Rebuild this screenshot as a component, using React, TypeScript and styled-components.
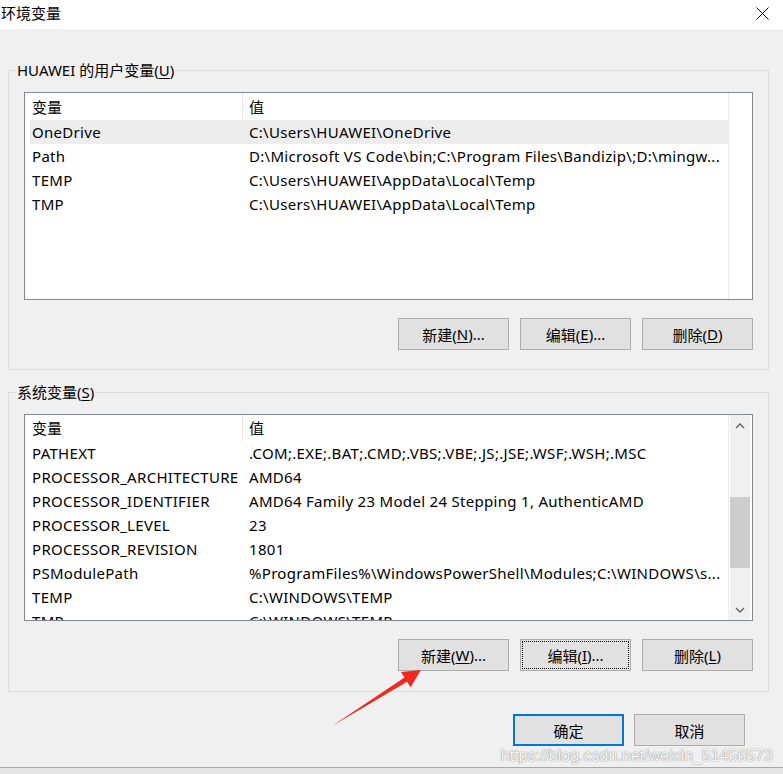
import React from "react";
import styled, { createGlobalStyle } from "styled-components";

const FONT = `"Noto Sans", "Noto Sans CJK SC", sans-serif`;

const GlobalStyle = createGlobalStyle`
  html, body { margin: 0; padding: 0; background: #f0f0f0; }
  body { font-family: ${FONT}; }
  * { box-sizing: border-box; }
`;

const Window = styled.div`
  position: relative;
  width: 783px;
  height: 774px;
  overflow: hidden;
  background: #f0f0f0;
  display: flex;
  flex-direction: column;
  font-family: ${FONT};
  font-size: 15px;
  color: #000;
`;

const TitleBar = styled.div`
  height: 29px;
  flex: none;
  background: #fff;
  display: flex;
  align-items: center;
  justify-content: space-between;
  padding: 0 14px 3px 1px;
`;

const Title = styled.span`
  font-size: 15px;
  line-height: 20px;
  color: #000;
`;

const Body = styled.div`
  flex: 1;
  display: flex;
  flex-direction: column;
  padding: 31px 14px 0 8px;
  border-bottom: 1px solid #a8a8a8;
`;

const BottomStrip = styled.div`
  height: 6px;
  flex: none;
  background: #e6e6e6;
`;

const Group = styled.fieldset<{ $bottom: number; $top?: number }>`
  margin: ${(p) => p.$top ?? 0}px 0 0 0;
  padding: 12px 15px ${(p) => p.$bottom}px 15px;
  border: 1px solid #dcdcdc;
  min-width: 0;
  display: flex;
  flex-direction: column;
`;

const Legend = styled.legend`
  margin-left: -8px;
  padding: 0 1px;
  font-size: 15px;
  line-height: 20px;
  color: #000;
`;

const Mn = styled.span`
  text-decoration: underline;
  text-underline-offset: 2px;
`;

const ListBox = styled.div<{ $h: number }>`
  height: ${(p) => p.$h}px;
  border: 1px solid #828790;
  background: #fff;
  display: flex;
  overflow: hidden;
`;

const ListContent = styled.div`
  width: 704px;
  flex: none;
  display: flex;
  flex-direction: column;
  overflow: hidden;
  border-right: 1px solid #eaeaea;
`;

const Gutter = styled.div`
  flex: 1;
  display: flex;
  padding: 0 2px 0 1px;
`;

const HeaderRow = styled.div<{ $h: number }>`
  display: grid;
  grid-template-columns: 218px 1fr;
  height: ${(p) => p.$h}px;
  flex: none;
`;

const HeaderCell = styled.div<{ $sep?: boolean }>`
  display: flex;
  align-items: center;
  padding-left: ${(p) => (p.$sep ? 7 : 6)}px;
  border-right: ${(p) => (p.$sep ? "1px solid #e5e5e5" : "none")};
  font-size: 15px;
  line-height: 20px;
`;

const Row = styled.div<{ $selected?: boolean }>`
  display: grid;
  grid-template-columns: 213px 1fr;
  height: 24px;
  flex: none;
  margin-left: 5px;
  background: ${(p) => (p.$selected ? "#ededed" : "transparent")};
`;

const Cell = styled.div<{ $first?: boolean }>`
  padding-left: ${(p) => (p.$first ? 2 : 6)}px;
  font-size: 15px;
  line-height: 24px;
  letter-spacing: 0.3px;
  white-space: nowrap;
  overflow: hidden;
`;

const ScrollBar = styled.div`
  flex: 1;
  background: #f0f0f0;
  display: flex;
  flex-direction: column;
`;

const ScrollArrow = styled.div`
  height: 21px;
  flex: none;
  display: flex;
  align-items: center;
  justify-content: center;
`;

const ScrollTrack = styled.div`
  flex: 1;
  display: flex;
  flex-direction: column;
  padding-top: 61px;
`;

const Thumb = styled.div`
  height: 71px;
  background: #cdcdcd;
`;

const ButtonRow = styled.div<{ $mt: number }>`
  display: flex;
  justify-content: flex-end;
  gap: 11px;
  margin-top: ${(p) => p.$mt}px;
`;

const Button = styled.button<{ $focused?: boolean; $default?: boolean }>`
  width: 111px;
  height: 32px;
  padding: 0;
  background: #e1e1e1;
  border: ${(p) => (p.$default ? "2px solid #0078d7" : "1px solid #adadad")};
  font-family: ${FONT};
  font-size: 15px;
  color: #000;
  display: flex;
  align-items: center;
  justify-content: center;
  outline: ${(p) => (p.$focused ? "1px dotted #000" : "none")};
  outline-offset: -3px;
`;

const Footer = styled.div`
  display: flex;
  justify-content: flex-end;
  gap: 10px;
  margin-top: 22px;
  padding-right: 24px;
`;

const Watermark = styled.div`
  position: absolute;
  right: 10px;
  bottom: 9px;
  font-family: "Liberation Sans", Arial, sans-serif;
  font-size: 16px;
  color: rgba(255, 255, 255, 0.95);
  text-shadow: 0 0 1px rgba(0, 0, 0, 0.45), 0 0 2px rgba(0, 0, 0, 0.2);
  pointer-events: none;
`;

const ArrowOverlay = styled.svg`
  position: absolute;
  left: 0;
  top: 0;
  pointer-events: none;
`;

const CloseIcon = () => (
  <svg width="13" height="13" viewBox="0 0 13 13">
    <path d="M0.5 0.5 L12.5 12.5 M12.5 0.5 L0.5 12.5" stroke="#000" strokeWidth="1" fill="none" />
  </svg>
);

const Chevron = ({ up }: { up?: boolean }) => (
  <svg width="10" height="6" viewBox="0 0 10 6">
    <path
      d={up ? "M1 5 L5 1 L9 5" : "M1 1 L5 5 L9 1"}
      stroke="#606060"
      strokeWidth="1.4"
      fill="none"
    />
  </svg>
);

type Item = { name: string; value: string; selected?: boolean };

const userVars: Item[] = [
  { name: "OneDrive", value: "C:\\Users\\HUAWEI\\OneDrive", selected: true },
  { name: "Path", value: "D:\\Microsoft VS Code\\bin;C:\\Program Files\\Bandizip\\;D:\\mingw..." },
  { name: "TEMP", value: "C:\\Users\\HUAWEI\\AppData\\Local\\Temp" },
  { name: "TMP", value: "C:\\Users\\HUAWEI\\AppData\\Local\\Temp" },
];

const sysVars: Item[] = [
  { name: "PATHEXT", value: ".COM;.EXE;.BAT;.CMD;.VBS;.VBE;.JS;.JSE;.WSF;.WSH;.MSC" },
  { name: "PROCESSOR_ARCHITECTURE", value: "AMD64" },
  { name: "PROCESSOR_IDENTIFIER", value: "AMD64 Family 23 Model 24 Stepping 1, AuthenticAMD" },
  { name: "PROCESSOR_LEVEL", value: "23" },
  { name: "PROCESSOR_REVISION", value: "1801" },
  { name: "PSModulePath", value: "%ProgramFiles%\\WindowsPowerShell\\Modules;C:\\WINDOWS\\s..." },
  { name: "TEMP", value: "C:\\WINDOWS\\TEMP" },
  { name: "TMP", value: "C:\\WINDOWS\\TEMP" },
];

const VarList = ({
  items,
  height,
  headerH,
  scroll,
}: {
  items: Item[];
  height: number;
  headerH: number;
  scroll?: boolean;
}) => (
  <ListBox $h={height}>
    <ListContent>
      <HeaderRow $h={headerH}>
        <HeaderCell $sep>变量</HeaderCell>
        <HeaderCell>值</HeaderCell>
      </HeaderRow>
      {items.map((it, i) => (
        <Row key={i} $selected={it.selected}>
          <Cell $first>{it.name}</Cell>
          <Cell>{it.value}</Cell>
        </Row>
      ))}
    </ListContent>
    <Gutter>
      {scroll && (
        <ScrollBar>
          <ScrollArrow>
            <Chevron up />
          </ScrollArrow>
          <ScrollTrack>
            <Thumb />
          </ScrollTrack>
          <ScrollArrow>
            <Chevron />
          </ScrollArrow>
        </ScrollBar>
      )}
    </Gutter>
  </ListBox>
);

export default function App() {
  return (
    <>
      <GlobalStyle />
      <Window>
        <TitleBar>
          <Title>环境变量</Title>
          <CloseIcon />
        </TitleBar>
        <Body>
          <Group $bottom={19}>
            <Legend>
              HUAWEI 的用户变量(<Mn>U</Mn>)
            </Legend>
            <VarList items={userVars} height={208} headerH={27} />
            <ButtonRow $mt={18}>
              <Button>
                新建(<Mn>N</Mn>)...
              </Button>
              <Button>
                编辑(<Mn>E</Mn>)...
              </Button>
              <Button>
                删除(<Mn>D</Mn>)
              </Button>
            </ButtonRow>
          </Group>
          <Group $bottom={20} $top={12}>
            <Legend>
              系统变量(<Mn>S</Mn>)
            </Legend>
            <VarList items={sysVars} height={207} headerH={26} scroll />
            <ButtonRow $mt={18}>
              <Button>
                新建(<Mn>W</Mn>)...
              </Button>
              <Button $focused>
                编辑(<Mn>I</Mn>)...
              </Button>
              <Button>
                删除(<Mn>L</Mn>)
              </Button>
            </ButtonRow>
          </Group>
          <Footer>
            <Button $default>确定</Button>
            <Button>取消</Button>
          </Footer>
        </Body>
        <BottomStrip />
        <Watermark>https://blog.csdn.net/weixin_51456573</Watermark>
        <ArrowOverlay width="783" height="774" viewBox="0 0 783 774">
          <polygon
            points="332,726 404.5,677.5 401,672 421,670 410.6,687.2 407.1,681.7"
            fill="#f02a1f"
          />
        </ArrowOverlay>
      </Window>
    </>
  );
}
